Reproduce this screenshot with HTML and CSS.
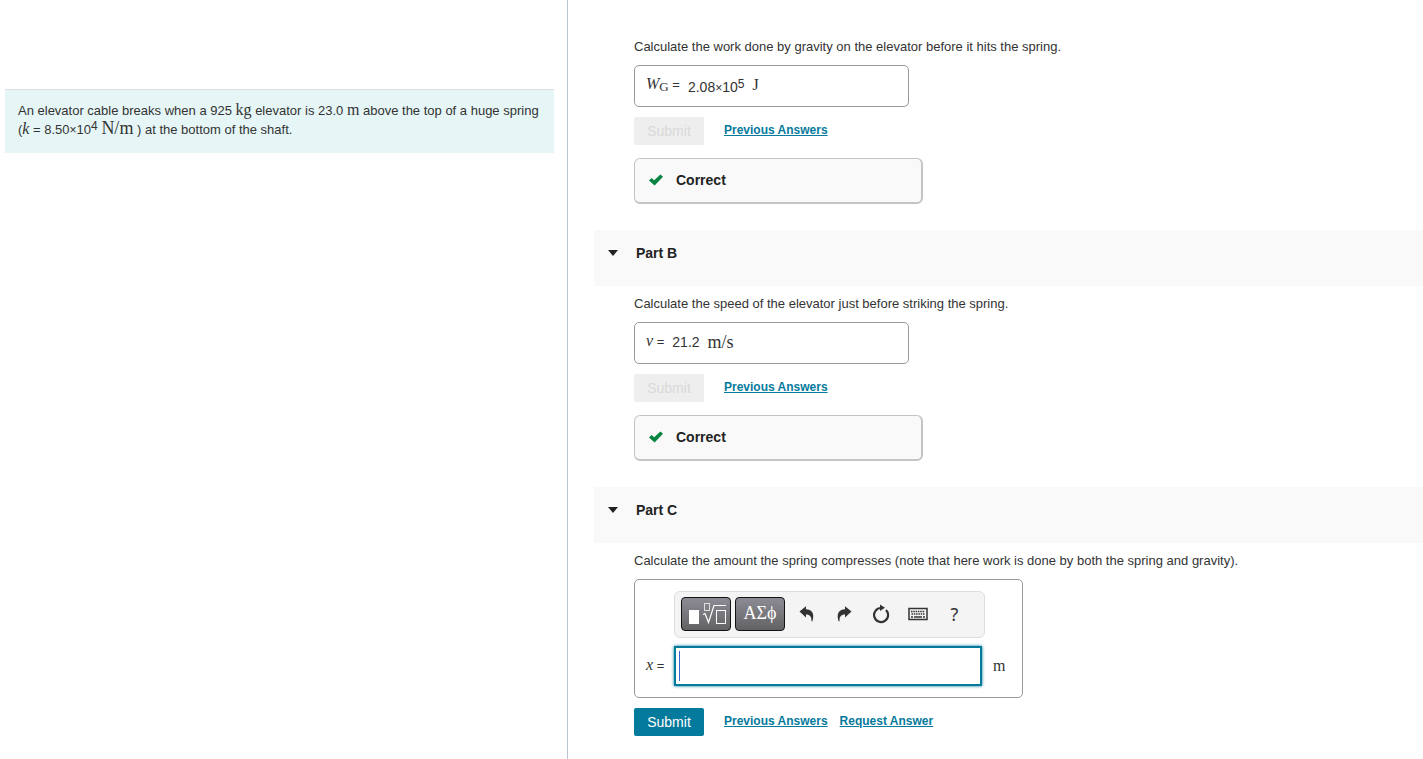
FILE: index.html
```
<!DOCTYPE html>
<html lang="en">
<head>
    <meta charset="UTF-8">
    <meta name="viewport" content="width=device-width, initial-scale=1.0">
    <title>Elevator and Spring</title>
    <link rel="stylesheet" href="styles.css">
</head>
<body>
    <div class="page">
        <aside class="problem">
            <p class="intro">An elevator cable breaks when a 925 <span class="unit">kg</span> elevator is 23.0 <span class="unit">m</span> above the top of a huge spring (<span class="var">k</span> = 8.50<span class="times">×</span>10<sup>4</sup> <span class="unit wide">N/m</span> ) at the bottom of the shaft.</p>
        </aside>

        <main class="parts">
            <section class="part">
                <div class="part-body first">
                    <p class="prompt">Calculate the work done by gravity on the elevator before it hits the spring.</p>
                    <div class="answer">
                        <span class="label"><span class="var">W</span><sub>G</sub> =</span>
                        <span class="value low">2.08<span class="times">×</span>10<sup>5</sup></span>
                        <span class="unit">J</span>
                    </div>
                    <div class="actions">
                        <button class="submit" disabled>Submit</button>
                        <a href="#">Previous Answers</a>
                    </div>
                    <div class="feedback">
                        <svg class="check" viewBox="0 0 14 12" width="14" height="12"><path d="M0 6.6 2.6 4 5.2 6.2 11.4 0.4 14 2.8 5.6 11.6Z" fill="#078440"/></svg>
                        Correct
                    </div>
                </div>
            </section>

            <section class="part">
                <h2 class="part-header"><span class="arrow"></span>Part B</h2>
                <div class="part-body">
                    <p class="prompt">Calculate the speed of the elevator just before striking the spring.</p>
                    <div class="answer">
                        <span class="label"><span class="var">v</span> =</span>
                        <span class="value">21.2</span>
                        <span class="unit wide">m/s</span>
                    </div>
                    <div class="actions">
                        <button class="submit" disabled>Submit</button>
                        <a href="#">Previous Answers</a>
                    </div>
                    <div class="feedback">
                        <svg class="check" viewBox="0 0 14 12" width="14" height="12"><path d="M0 6.6 2.6 4 5.2 6.2 11.4 0.4 14 2.8 5.6 11.6Z" fill="#078440"/></svg>
                        Correct
                    </div>
                </div>
            </section>

            <section class="part">
                <h2 class="part-header"><span class="arrow"></span>Part C</h2>
                <div class="part-body">
                    <p class="prompt">Calculate the amount the spring compresses (note that here work is done by both the spring and gravity).</p>
                    <div class="editor">
                        <div class="toolbar">
                            <button class="palette" aria-label="Templates">
                                <svg viewBox="0 0 40 24" width="40" height="24" fill="none" stroke="#fff">
                                    <rect x="3" y="8" width="10" height="14" fill="#fff" stroke="none"/>
                                    <rect x="18.5" y="1.5" width="5" height="7" stroke="#ddd"/>
                                    <path d="M17 12.5 19 11.5 22.5 20.5 28 3.5H40" stroke-width="1.2"/>
                                    <rect x="30.5" y="8.5" width="9" height="13"/>
                                </svg>
                            </button>
                            <button class="palette">ΑΣϕ</button>
                            <button class="tool" aria-label="Undo">
                                <svg viewBox="0 0 16 16" width="16" height="16"><path d="M.5 5.6 7 .2V3.2C12.5 3.2 16 7 13.4 15.2H12.4C12.8 11 11 8.6 7 8.6V11.4Z" fill="#333"/></svg>
                            </button>
                            <button class="tool" aria-label="Redo">
                                <svg viewBox="0 0 16 16" width="16" height="16"><path d="M15.5 5.6 9 .2V3.2C3.5 3.2 0 7 2.6 15.2H3.6C3.2 11 5 8.6 9 8.6V11.4Z" fill="#333"/></svg>
                            </button>
                            <button class="tool" aria-label="Reset">
                                <svg viewBox="0 0 18 20" width="18" height="20"><path d="M14 6A7 7 0 1 1 9 4" fill="none" stroke="#333" stroke-width="2.2"/><path d="M8 .5 13 3.8 8 7Z" fill="#333"/></svg>
                            </button>
                            <button class="tool" aria-label="Keyboard shortcuts">
                                <svg viewBox="0 0 20 14" width="20" height="14">
                                    <rect x="1" y="1.5" width="18" height="11" fill="none" stroke="#333" stroke-width="1.5"/>
                                    <path d="M3 4.5H17M3.5 7H17" stroke="#333" stroke-width="1.5" stroke-dasharray="1.5 .8"/>
                                    <path d="M3 10H5M6 10H14M15 10H17" stroke="#333" stroke-width="1.5"/>
                                </svg>
                            </button>
                            <button class="tool help" aria-label="Help">?</button>
                        </div>
                        <label class="label" for="answer-x"><span class="var">x</span> =</label>
                        <div class="field">
                            <input type="text" id="answer-x">
                            <span class="caret"></span>
                        </div>
                        <span class="unit">m</span>
                    </div>
                    <div class="actions">
                        <button class="submit">Submit</button>
                        <a href="#">Previous Answers</a>
                        <a href="#">Request Answer</a>
                    </div>
                </div>
            </section>
        </main>
    </div>
</body>
</html>
```
FILE: styles.css
```
* {
    box-sizing: border-box;
}
body {
    margin: 0;
    font-family: "Liberation Sans", Arial, sans-serif;
    font-size: 13px;
    line-height: 18px;
    color: #333;
    background-color: #fff;
}
.page {
    display: grid;
    grid-template-columns: minmax(0, 568px) minmax(0, 1fr);
    min-height: 100vh;
}
.problem {
    padding: 89px 13px 0 5px;
    border-right: 1px solid #bcc3d0;
}
.intro {
    margin: 0;
    padding: 11px 8px 14px 13px;
    border-top: 1px solid #ddd;
    background-color: #e6f6f6;
    line-height: 19px;
}
.parts {
    padding-left: 26px;
}

/* math */
.var, .unit, sub {
    font-family: "Liberation Serif", "Times New Roman", serif;
    font-size: 16px;
    line-height: 0;
}
.var {
    font-style: italic;
}
.unit.wide {
    font-size: 18px;
}
.times {
    font-size: 12px;
    line-height: 0;
}
sup, sub {
    line-height: 0;
}
sup {
    font-size: 12px;
    vertical-align: 4px;
}
sub {
    font-size: 13px;
    vertical-align: -2px;
}

/* parts */
.part-header {
    display: flex;
    align-items: flex-start;
    gap: 18px;
    height: 56px;
    margin: 0;
    padding: 14px 14px 0;
    background-color: #f9f9f9;
    color: #222;
    font-size: 14px;
    line-height: 18px;
}
.arrow {
    margin-top: 6px;
    border: 5px solid transparent;
    border-top: 6px solid #222;
    border-bottom: 0;
}
.part-body {
    padding: 9px 20px 26px 40px;
}
.part-body.first {
    padding-top: 38px;
}
.prompt {
    margin: 0 0 9px;
}
.answer {
    display: flex;
    align-items: center;
    gap: 8px;
    width: 275px;
    height: 42px;
    padding: 0 11px 2px;
    border: 1px solid #999;
    border-radius: 5px;
}
.value {
    font-size: 14px;
}
.value.low {
    padding-top: 4px;
}
.actions {
    display: flex;
    align-items: center;
    gap: 12px;
    margin-top: 10px;
}
.submit {
    width: 70px;
    height: 28px;
    margin-right: 8px;
    padding: 0;
    border: 0;
    border-radius: 2px;
    background-color: #047a9c;
    color: #fff;
    font: 14px "Liberation Sans", Arial, sans-serif;
}
.submit:disabled {
    background-color: #eee;
    color: #d9d9d9;
}
.actions a {
    color: #047a9c;
    font-size: 12px;
    font-weight: bold;
    padding-bottom: 2px;
}
.feedback {
    display: flex;
    align-items: center;
    gap: 13px;
    width: 289px;
    height: 46px;
    margin-top: 13px;
    padding: 0 14px 2px;
    border: 1px solid #c4c4c4;
    border-right-width: 2px;
    border-bottom-width: 2px;
    border-radius: 6px;
    background-color: #f9f9f9;
    color: #222;
    font-size: 14px;
    font-weight: bold;
}

/* equation editor */
.editor {
    display: grid;
    grid-template-columns: 28px 308px auto;
    align-items: center;
    row-gap: 8px;
    width: 389px;
    max-width: 100%;
    padding: 11px;
    border: 1px solid #999;
    border-radius: 5px;
}
.editor .unit {
    padding-left: 11px;
}
.toolbar {
    grid-column: 2 / 4;
    display: flex;
    align-items: center;
    width: 311px;
    height: 47px;
    padding: 0 6px 2px;
    border: 1px solid #ddd;
    border-radius: 6px;
    background-color: #f4f4f4;
}
.palette {
    display: flex;
    align-items: center;
    justify-content: center;
    width: 50px;
    height: 34px;
    margin-right: 4px;
    padding: 0;
    border: 1px solid #111;
    border-radius: 4px;
    background: linear-gradient(#8d8c95, #626264);
    color: #fff;
    font: 18px "Liberation Serif", serif;
}
.palette + .tool {
    margin-left: -1px;
}
.tool {
    display: flex;
    align-items: center;
    justify-content: center;
    width: 37px;
    height: 34px;
    padding: 0;
    border: 0;
    background: none;
    color: #333;
}
.help {
    font: 18px "Noto Sans", sans-serif;
}
.field {
    position: relative;
    height: 40px;
}
.field input {
    display: block;
    width: 100%;
    height: 100%;
    padding: 0 8px;
    border: 2px solid #047a9c;
    outline: none;
    box-shadow: 0 0 3px #047a9c;
    font-size: 16px;
}
.caret {
    position: absolute;
    top: 5px;
    left: 5px;
    width: 1px;
    height: 30px;
    background-color: #36c;
}
```
